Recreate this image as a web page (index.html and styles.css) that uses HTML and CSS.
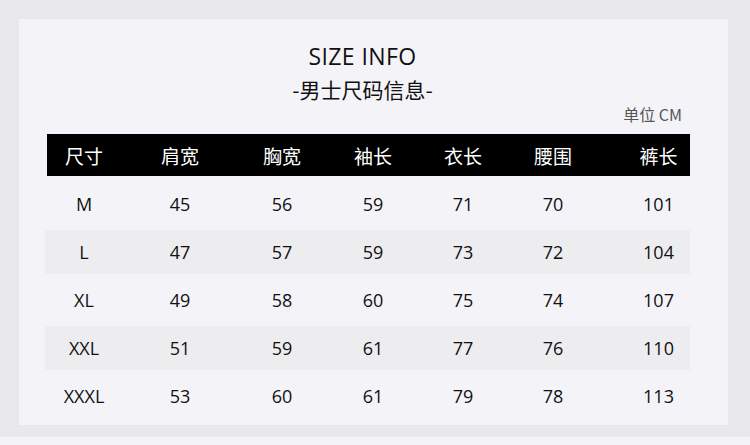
FILE: index.html
```html
<!DOCTYPE html>
<html lang="zh">
<head>
<meta charset="utf-8">
<title>SIZE INFO</title>
<link rel="stylesheet" href="styles.css">
</head>
<body>
<div class="page">
  <div class="card">
    <h1 class="title">SIZE INFO</h1>
    <h2 class="subtitle">-男士尺码信息-</h2>
    <div class="unit">单位 CM</div>
    <div class="table">
      <div class="row head">
        <span>尺寸</span><span>肩宽</span><span>胸宽</span><span>袖长</span><span>衣长</span><span>腰围</span><span class="last">裤长</span>
      </div>
      <div class="row">
        <span>M</span><span>45</span><span>56</span><span>59</span><span>71</span><span>70</span><span class="last">101</span>
      </div>
      <div class="row stripe">
        <span>L</span><span>47</span><span>57</span><span>59</span><span>73</span><span>72</span><span class="last">104</span>
      </div>
      <div class="row">
        <span>XL</span><span>49</span><span>58</span><span>60</span><span>75</span><span>74</span><span class="last">107</span>
      </div>
      <div class="row stripe">
        <span>XXL</span><span>51</span><span>59</span><span>61</span><span>77</span><span>76</span><span class="last">110</span>
      </div>
      <div class="row">
        <span>XXXL</span><span>53</span><span>60</span><span>61</span><span>79</span><span>78</span><span class="last">113</span>
      </div>
    </div>
  </div>
  <div class="strip"></div>
</div>
</body>
</html>
```
FILE: styles.css
```css
* { box-sizing: border-box; }
html, body {
  margin: 0;
  padding: 0;
  background: #e9e9eb;
}
body {
  width: 750px;
  height: 445px;
  overflow: hidden;
  font-family: "Open Sans", "Noto Sans CJK SC", sans-serif;
  color: #111;
}
.page {
  padding-top: 19px;
}
.card {
  margin-left: 19px;
  width: 709px;
  height: 406px;
  background: #f4f4f8;
  padding-top: 23px;
}
.title {
  margin: 0;
  text-align: center;
  font-family: "Open Sans", sans-serif;
  font-weight: 400;
  font-size: 23px;
  line-height: 28px;
  padding-right: 22px;
  letter-spacing: 0.4px;
}
.subtitle {
  margin: 0;
  text-align: center;
  font-family: "Noto Sans CJK SC", sans-serif;
  font-weight: 400;
  font-size: 21px;
  line-height: 30px;
  margin-top: 4px;
  padding-right: 22px;
}
.unit {
  text-align: right;
  padding-right: 46px;
  font-family: "Noto Sans CJK SC", "Open Sans", sans-serif;
  font-size: 16px;
  line-height: 20px;
  color: #555;
  margin-top: 0;
}
.table {
  margin-top: 10px;
  margin-left: 28px;
  width: 643px;
}
.row {
  display: grid;
  grid-template-columns: 74px 118px 86px 96px 84px 96px 89px;
  align-items: center;
  height: 48px;
  font-size: 18px;
  text-align: center;
}
.row .last {
  padding-left: 26px;
}
.row.head {
  height: 42px;
  background: #000;
  color: #fff;
  font-family: "Noto Sans CJK SC", sans-serif;
  font-size: 19px;
  margin-bottom: 4px;
}
.row.stripe {
  height: 44px;
  margin: 2px 0 2px -2px;
  padding-left: 2px;
  width: 645px;
  background: #ededf0;
}
.strip {
  margin-top: 12px;
  height: 8px;
  background: #f4f4f8;
}
```
